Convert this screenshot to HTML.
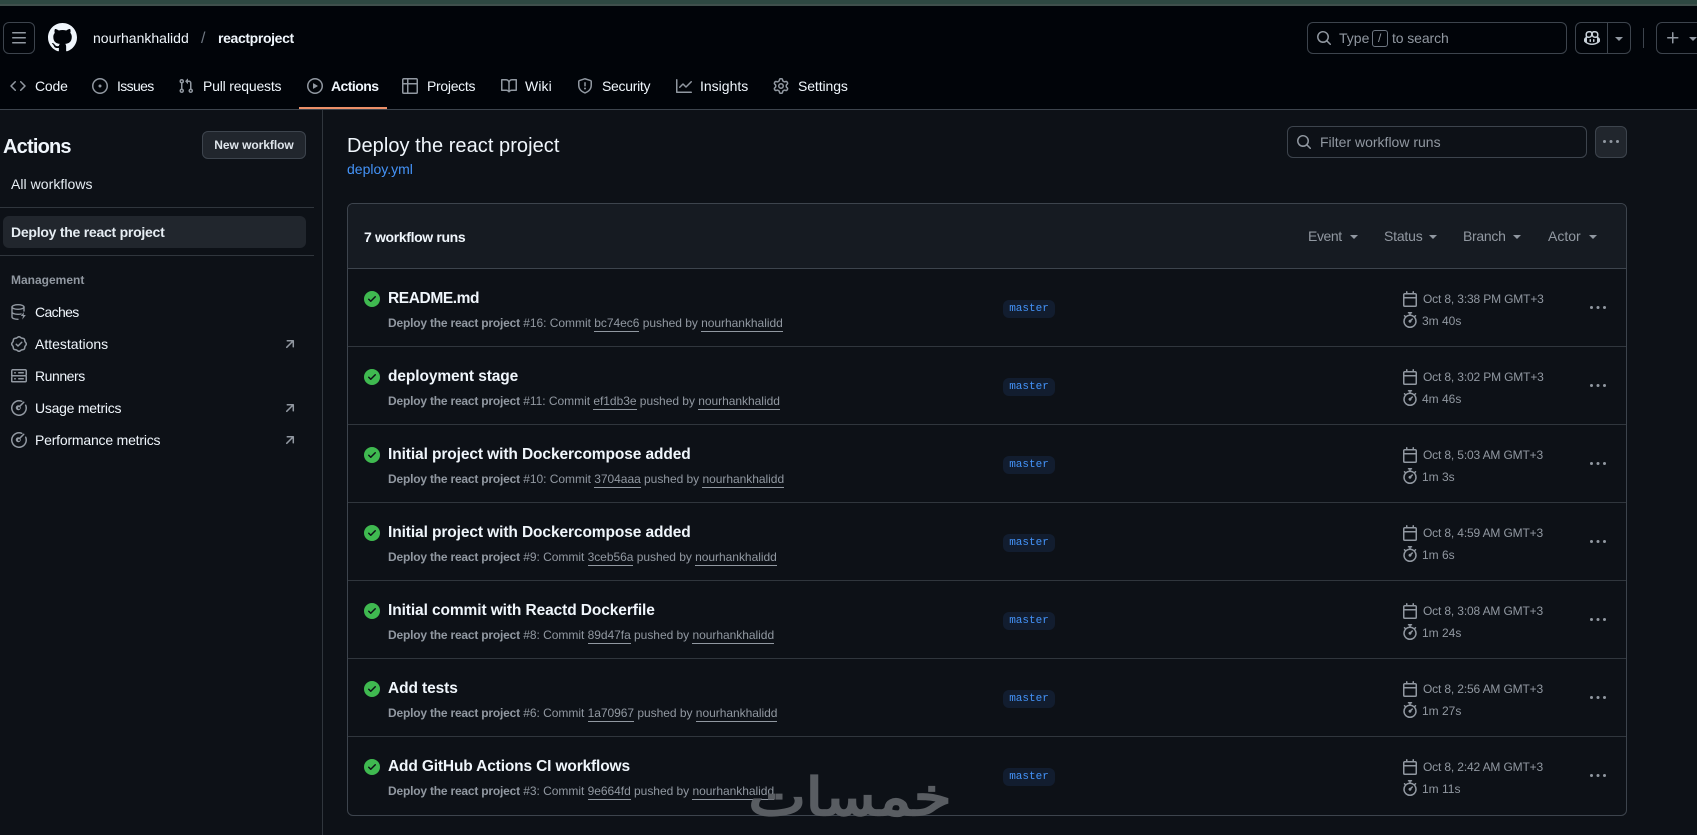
<!DOCTYPE html>
<html lang="en"><head><meta charset="utf-8"><title>Deploy the react project</title>
<style>
*{box-sizing:border-box}
html,body{margin:0;padding:0;width:1697px;height:835px;overflow:hidden;background:#0d1117}
body{position:relative;font-family:"Liberation Sans",sans-serif;font-size:14px;color:#f0f6fc}
.a,.t,svg.i{position:absolute}
.t{white-space:nowrap;line-height:20px}
svg.i{fill:#9198a1;display:block}
.b{font-weight:700}
.m{color:#9198a1}
.box{position:absolute;border:1px solid #3d444d;border-radius:6px}
.caret{position:absolute;width:0;height:0;border:4px solid transparent;border-top-color:#9198a1;border-bottom:0}
.ln{position:absolute;background:#30363d}
u{text-decoration:none;border-bottom:1px solid #9198a1;padding-bottom:1px}
.badge{position:absolute;left:1003px;width:52px;height:18px;border-radius:6px;background:#121d2f;color:#4493f8;font:11px/18px "Liberation Mono",monospace;text-align:center}
.rt{left:388px;font-size:15.5px;font-weight:700;letter-spacing:-.1px}
.rs{left:388px;font-size:12px;color:#9198a1;letter-spacing:-.03px}
.rs b{letter-spacing:-.2px}
.rd{left:1423px;font-size:12px;color:#9198a1;letter-spacing:-.15px}
.rr{left:1422px;font-size:12px;color:#9198a1}
.ok{left:364px;fill:#3fb950 !important}
.ic{left:1402px}
.kb{left:1590px}
</style></head><body>
<svg width="0" height="0" style="position:absolute"><defs>
<symbol id="gh" viewBox="0 0 16 16"><path d="M8 0c4.42 0 8 3.58 8 8a8.013 8.013 0 0 1-5.45 7.59c-.4.08-.55-.17-.55-.38 0-.27.01-1.13.01-2.2 0-.75-.25-1.23-.54-1.48 1.78-.2 3.65-.88 3.65-3.95 0-.88-.31-1.59-.82-2.15.08-.2.36-1.02-.08-2.12 0 0-.67-.22-2.2.82-.64-.18-1.32-.27-2-.27-.68 0-1.36.09-2 .27-1.53-1.03-2.2-.82-2.2-.82-.44 1.1-.16 1.92-.08 2.12-.51.56-.82 1.28-.82 2.15 0 3.06 1.86 3.75 3.64 3.95-.23.2-.44.55-.51 1.07-.46.21-1.61.55-2.33-.66-.15-.24-.6-.83-1.23-.82-.67.01-.27.38.01.53.34.19.73.9.82 1.13.16.45.68 1.31 2.69.94 0 .67.01 1.3.01 1.49 0 .21-.15.45-.55.38A7.995 7.995 0 0 1 0 8c0-4.42 3.58-8 8-8Z"/></symbol>
<symbol id="bars" viewBox="0 0 16 16"><path d="M1 2.75A.75.75 0 0 1 1.75 2h12.5a.75.75 0 0 1 0 1.5H1.75A.75.75 0 0 1 1 2.75Zm0 5A.75.75 0 0 1 1.75 7h12.5a.75.75 0 0 1 0 1.5H1.75A.75.75 0 0 1 1 7.75ZM1.75 12h12.5a.75.75 0 0 1 0 1.5H1.75a.75.75 0 0 1 0-1.5Z"/></symbol>
<symbol id="code" viewBox="0 0 16 16"><path d="m11.28 3.22 4.25 4.25a.75.75 0 0 1 0 1.06l-4.25 4.25a.749.749 0 0 1-1.275-.326.749.749 0 0 1 .215-.734L13.94 8l-3.72-3.72a.749.749 0 0 1 .326-1.275.749.749 0 0 1 .734.215Zm-6.56 0a.751.751 0 0 1 1.042.018.751.751 0 0 1 .018 1.042L2.06 8l3.72 3.72a.749.749 0 0 1-.326 1.275.749.749 0 0 1-.734-.215L.47 8.53a.75.75 0 0 1 0-1.06Z"/></symbol>
<symbol id="issue" viewBox="0 0 16 16"><path d="M8 9.5a1.5 1.5 0 1 0 0-3 1.5 1.5 0 0 0 0 3Z"/><path d="M8 0a8 8 0 1 1 0 16A8 8 0 0 1 8 0ZM1.5 8a6.5 6.5 0 1 0 13 0 6.5 6.5 0 0 0-13 0Z"/></symbol>
<symbol id="pr" viewBox="0 0 16 16"><path d="M1.5 3.25a2.25 2.25 0 1 1 3 2.122v5.256a2.251 2.251 0 1 1-1.5 0V5.372A2.25 2.25 0 0 1 1.5 3.25Zm5.677-.177L9.573.677A.25.25 0 0 1 10 .854V2.5h1A2.5 2.5 0 0 1 13.5 5v5.628a2.251 2.251 0 1 1-1.5 0V5a1 1 0 0 0-1-1h-1v1.646a.25.25 0 0 1-.427.177L7.177 3.427a.25.25 0 0 1 0-.354ZM3.75 2.5a.75.75 0 1 0 0 1.5.75.75 0 0 0 0-1.5Zm0 9.5a.75.75 0 1 0 0 1.5.75.75 0 0 0 0-1.5Zm8.25.75a.75.75 0 1 0 1.5 0 .75.75 0 0 0-1.5 0Z"/></symbol>
<symbol id="play" viewBox="0 0 16 16"><path d="M8 0a8 8 0 1 1 0 16A8 8 0 0 1 8 0ZM1.5 8a6.5 6.5 0 1 0 13 0 6.5 6.5 0 0 0-13 0Zm4.879-2.773 4.264 2.559a.25.25 0 0 1 0 .428l-4.264 2.559A.25.25 0 0 1 6 10.559V5.442a.25.25 0 0 1 .379-.215Z"/></symbol>
<symbol id="table" viewBox="0 0 16 16"><path d="M0 1.75C0 .784.784 0 1.75 0h12.5C15.216 0 16 .784 16 1.75v12.5A1.75 1.75 0 0 1 14.25 16H1.75A1.75 1.75 0 0 1 0 14.25ZM6.5 6.5v8h7.75a.25.25 0 0 0 .25-.25V6.5Zm8-1.5V1.75a.25.25 0 0 0-.25-.25H6.5V5Zm-13 1.5v7.75c0 .138.112.25.25.25H5v-8ZM5 5V1.5H1.75a.25.25 0 0 0-.25.25V5Z"/></symbol>
<symbol id="book" viewBox="0 0 16 16"><path d="M0 1.75A.75.75 0 0 1 .75 1h4.253c1.227 0 2.317.59 3 1.501A3.743 3.743 0 0 1 11.006 1h4.245a.75.75 0 0 1 .75.75v10.5a.75.75 0 0 1-.75.75h-4.507a2.25 2.25 0 0 0-1.591.659l-.622.621a.75.75 0 0 1-1.06 0l-.622-.621A2.25 2.25 0 0 0 5.258 13H.75a.75.75 0 0 1-.75-.75Zm7.251 10.324.004-5.073-.002-2.253A2.25 2.25 0 0 0 5.003 2.5H1.5v9h3.757a3.75 3.75 0 0 1 1.994.574ZM8.755 4.75l-.004 7.322a3.752 3.752 0 0 1 1.992-.572H14.5v-9h-3.495a2.25 2.25 0 0 0-2.25 2.25Z"/></symbol>
<symbol id="shield" viewBox="0 0 16 16"><path d="M7.467.133a1.748 1.748 0 0 1 1.066 0l5.25 1.68A1.75 1.75 0 0 1 15 3.48V7c0 1.566-.32 3.182-1.303 4.682-.983 1.498-2.585 2.813-5.032 3.855a1.697 1.697 0 0 1-1.33 0c-2.447-1.042-4.049-2.357-5.032-3.855C1.32 10.182 1 8.566 1 7V3.48a1.75 1.75 0 0 1 1.217-1.667Zm.61 1.429a.25.25 0 0 0-.153 0l-5.25 1.68a.25.25 0 0 0-.174.238V7c0 1.358.275 2.666 1.057 3.86.784 1.194 2.121 2.34 4.366 3.297a.196.196 0 0 0 .154 0c2.245-.956 3.582-2.104 4.366-3.298C13.225 9.666 13.5 8.36 13.5 7V3.48a.251.251 0 0 0-.174-.237l-5.25-1.68ZM8.75 4.75v3a.75.75 0 0 1-1.5 0v-3a.75.75 0 0 1 1.5 0ZM9 10.5a1 1 0 1 1-2 0 1 1 0 0 1 2 0Z"/></symbol>
<symbol id="graph" viewBox="0 0 16 16"><path d="M1.5 1.75V13.5h13.75a.75.75 0 0 1 0 1.5H.75a.75.75 0 0 1-.75-.75V1.75a.75.75 0 0 1 1.5 0Zm14.28 2.53-5.25 5.25a.75.75 0 0 1-1.06 0L7 7.06 4.28 9.78a.751.751 0 0 1-1.042-.018.751.751 0 0 1-.018-1.042l3.25-3.25a.75.75 0 0 1 1.06 0L10 7.94l4.72-4.72a.751.751 0 0 1 1.042.018.751.751 0 0 1 .018 1.042Z"/></symbol>
<symbol id="gear" viewBox="0 0 16 16"><path d="M8 0a8.2 8.2 0 0 1 .701.031C9.444.095 9.99.645 10.16 1.29l.288 1.107c.018.066.079.158.212.224.231.114.454.243.668.386.123.082.233.09.299.071l1.103-.303c.644-.176 1.392.021 1.82.63.27.385.506.792.704 1.218.315.675.111 1.422-.364 1.891l-.814.806c-.049.048-.098.147-.088.294.016.257.016.515 0 .772-.01.147.038.246.088.294l.814.806c.475.469.679 1.216.364 1.891a7.977 7.977 0 0 1-.704 1.217c-.428.61-1.176.807-1.82.63l-1.102-.302c-.067-.019-.177-.011-.3.071a5.909 5.909 0 0 1-.668.386c-.133.066-.194.158-.211.224l-.29 1.106c-.168.646-.715 1.196-1.458 1.26a8.006 8.006 0 0 1-1.402 0c-.743-.064-1.289-.614-1.458-1.26l-.289-1.106c-.018-.066-.079-.158-.212-.224a5.738 5.738 0 0 1-.668-.386c-.123-.082-.233-.09-.299-.071l-1.103.303c-.644.176-1.392-.021-1.82-.63a8.12 8.12 0 0 1-.704-1.218c-.315-.675-.111-1.422.363-1.891l.815-.806c.05-.048.098-.147.088-.294a6.214 6.214 0 0 1 0-.772c.01-.147-.038-.246-.088-.294l-.815-.806C.635 6.045.431 5.298.746 4.623a7.92 7.92 0 0 1 .704-1.217c.428-.61 1.176-.807 1.82-.63l1.102.302c.067.019.177.011.3-.071.214-.143.437-.272.668-.386.133-.066.194-.158.211-.224l.29-1.106C6.009.645 6.556.095 7.299.03 7.53.01 7.764 0 8 0Zm-.571 1.525c-.036.003-.108.036-.137.146l-.289 1.105c-.147.561-.549.967-.998 1.189-.173.086-.34.183-.5.29-.417.278-.97.423-1.529.27l-1.103-.303c-.109-.03-.175.016-.195.045-.22.312-.412.644-.573.99-.014.031-.021.11.059.19l.815.806c.411.406.562.957.53 1.456a4.709 4.709 0 0 0 0 .582c.032.499-.119 1.05-.53 1.456l-.815.806c-.081.08-.073.159-.059.19.162.346.353.677.573.989.02.03.085.076.195.046l1.102-.303c.56-.153 1.113-.008 1.53.27.161.107.328.204.501.29.447.222.85.629.997 1.189l.289 1.105c.029.109.101.143.137.146a6.6 6.6 0 0 0 1.142 0c.036-.003.108-.036.137-.146l.289-1.105c.147-.561.549-.967.998-1.189.173-.086.34-.183.5-.29.417-.278.97-.423 1.529-.27l1.103.303c.109.029.175-.016.195-.045.22-.313.411-.644.573-.99.014-.031.021-.11-.059-.19l-.815-.806c-.411-.406-.562-.957-.53-1.456a4.709 4.709 0 0 0 0-.582c-.032-.499.119-1.05.53-1.456l.815-.806c.081-.08.073-.159.059-.19a6.464 6.464 0 0 0-.573-.989c-.02-.03-.085-.076-.195-.046l-1.102.303c-.56.153-1.113.008-1.53-.27a4.44 4.44 0 0 0-.501-.29c-.447-.222-.85-.629-.997-1.189l-.289-1.105c-.029-.11-.101-.143-.137-.146a6.6 6.6 0 0 0-1.142 0ZM11 8a3 3 0 1 1-6 0 3 3 0 0 1 6 0ZM9.5 8a1.5 1.5 0 1 0-3.001.001A1.5 1.5 0 0 0 9.5 8Z"/></symbol>
<symbol id="search" viewBox="0 0 16 16"><path d="M10.68 11.74a6 6 0 0 1-7.922-8.982 6 6 0 0 1 8.982 7.922l3.04 3.04a.749.749 0 0 1-.326 1.275.749.749 0 0 1-.734-.215ZM11.5 7a4.499 4.499 0 1 0-8.997 0A4.499 4.499 0 0 0 11.5 7Z"/></symbol>
<symbol id="kebab" viewBox="0 0 16 16"><path d="M8 9a1.5 1.5 0 1 0 0-3 1.5 1.5 0 0 0 0 3ZM1.5 9a1.5 1.5 0 1 0 0-3 1.5 1.5 0 0 0 0 3Zm13 0a1.5 1.5 0 1 0 0-3 1.5 1.5 0 0 0 0 3Z"/></symbol>
<symbol id="check" viewBox="0 0 16 16"><path d="M8 16A8 8 0 1 1 8 0a8 8 0 0 1 0 16Zm3.78-9.72a.751.751 0 0 0-.018-1.042.751.751 0 0 0-1.042-.018L6.75 9.19 5.28 7.72a.751.751 0 0 0-1.042.018.751.751 0 0 0-.018 1.042l2 2a.75.75 0 0 0 1.06 0Z"/></symbol>
<symbol id="cal" viewBox="0 0 16 16"><path d="M4.75 0a.75.75 0 0 1 .75.75V2h5V.75a.75.75 0 0 1 1.5 0V2h1.25c.966 0 1.75.784 1.75 1.75v10.5A1.75 1.75 0 0 1 13.25 16H2.75A1.75 1.75 0 0 1 1 14.25V3.75C1 2.784 1.784 2 2.75 2H4V.75A.75.75 0 0 1 4.75 0ZM2.5 7.5v6.75c0 .138.112.25.25.25h10.5a.25.25 0 0 0 .25-.25V7.5Zm10.75-4H2.75a.25.25 0 0 0-.25.25V6h11V3.75a.25.25 0 0 0-.25-.25Z"/></symbol>
<symbol id="watch" viewBox="0 0 16 16"><path d="M5.75.75A.75.75 0 0 1 6.5 0h3a.75.75 0 0 1 0 1.5h-.75v1l-.001.041a6.724 6.724 0 0 1 3.464 1.435l.007-.006.75-.75a.749.749 0 0 1 1.275.326.749.749 0 0 1-.215.734l-.75.75-.006.007a6.75 6.75 0 1 1-10.548 0L2.72 5.03l-.75-.75a.751.751 0 0 1 .018-1.042.751.751 0 0 1 1.042-.018l.75.75.007.006A6.72 6.72 0 0 1 7.25 2.541V1.5H6.5a.75.75 0 0 1-.75-.75ZM8 14.5a5.25 5.25 0 1 0-.001-10.501A5.25 5.25 0 0 0 8 14.5Zm.389-6.7 1.33-1.33a.75.75 0 1 1 1.061 1.06L9.45 8.861A1.503 1.503 0 0 1 8 10.75a1.499 1.499 0 1 1 .389-2.95Z"/></symbol>
<symbol id="arrow" viewBox="0 0 16 16"><path d="M4.53 4.75A.75.75 0 0 1 5.28 4h6.01a.75.75 0 0 1 .75.75v6.01a.75.75 0 0 1-1.5 0v-4.2l-5.26 5.261a.749.749 0 0 1-1.275-.326.749.749 0 0 1 .215-.734L9.48 5.5h-4.2a.75.75 0 0 1-.75-.75Z"/></symbol>
<symbol id="plus" viewBox="0 0 16 16"><path d="M7.75 2a.75.75 0 0 1 .75.75V7h4.25a.75.75 0 0 1 0 1.5H8.5v4.25a.75.75 0 0 1-1.5 0V8.5H2.75a.75.75 0 0 1 0-1.5H7V2.75A.75.75 0 0 1 7.75 2Z"/></symbol>
<symbol id="copilot" viewBox="0 0 16 16"><path d="M7.998 15.035c-4.562 0-7.873-2.914-7.998-3.749V9.338c.085-.628.677-1.686 1.588-2.065.013-.07.024-.143.036-.218.029-.183.06-.384.126-.612-.201-.508-.254-1.084-.254-1.656 0-.87.128-1.769.693-2.484.579-.733 1.494-1.124 2.724-1.261 1.206-.134 2.262.034 2.944.765.05.053.096.108.139.165.044-.057.094-.112.143-.165.682-.731 1.738-.899 2.944-.765 1.23.137 2.145.528 2.724 1.261.566.715.693 1.614.693 2.484 0 .572-.053 1.148-.254 1.656.066.228.098.429.126.612.012.076.024.148.037.218.924.385 1.522 1.471 1.591 2.095v1.872c0 .766-3.351 3.795-8.002 3.795Zm0-1.485c2.28 0 4.584-1.11 5.002-1.433V7.862l-.023-.116c-.49.21-1.075.291-1.727.291-1.146 0-2.059-.327-2.71-.991A3.222 3.222 0 0 1 8 6.303a3.24 3.24 0 0 1-.544.743c-.65.664-1.563.991-2.71.991-.652 0-1.236-.081-1.727-.291l-.023.116v4.255c.419.323 2.722 1.433 5.002 1.433ZM6.762 2.83c-.193-.206-.637-.413-1.682-.297-1.019.113-1.479.404-1.713.7-.247.312-.369.789-.369 1.554 0 .793.129 1.171.308 1.371.162.181.519.379 1.442.379.853 0 1.339-.235 1.638-.54.315-.322.527-.827.617-1.553.117-.935-.037-1.395-.241-1.614Zm4.155-.297c-1.044-.116-1.488.091-1.681.297-.204.219-.359.679-.242 1.614.091.726.303 1.231.618 1.553.299.305.784.54 1.638.54.922 0 1.28-.198 1.442-.379.179-.2.308-.578.308-1.371 0-.765-.123-1.242-.37-1.554-.233-.296-.693-.587-1.713-.7Z"/><path d="M6.25 9.037a.75.75 0 0 1 .75.75v1.501a.75.75 0 0 1-1.5 0V9.787a.75.75 0 0 1 .75-.75Zm4.25.75v1.501a.75.75 0 0 1-1.5 0V9.787a.75.75 0 0 1 1.5 0Z"/></symbol>
<symbol id="cache" viewBox="0 0 16 16"><g fill="none" stroke="#9198a1" stroke-width="1.4" stroke-linecap="round"><ellipse cx="7" cy="3" rx="6" ry="2.3"/><path d="M1 3v10c0 1.3 2.6 2.3 6 2.3M1 8c0 1.3 2.6 2.3 6 2.3 1 0 2-.1 3-.3M13 3v4"/></g><path d="M13 8l-3.2 4h2.2l-.8 3.6 3.6-4.6h-2.2z" fill="#9198a1"/></symbol>
<symbol id="verified" viewBox="0 0 16 16"><path d="m9.585.52.929.68c.153.112.331.186.518.215l1.138.175a2.678 2.678 0 0 1 2.24 2.24l.174 1.139c.029.187.103.365.215.518l.68.928a2.677 2.677 0 0 1 0 3.17l-.68.928a1.174 1.174 0 0 0-.215.518l-.175 1.138a2.678 2.678 0 0 1-2.241 2.241l-1.138.175a1.17 1.17 0 0 0-.518.215l-.928.68a2.677 2.677 0 0 1-3.17 0l-.928-.68a1.174 1.174 0 0 0-.518-.215L3.83 14.41a2.678 2.678 0 0 1-2.24-2.24l-.175-1.138a1.17 1.17 0 0 0-.215-.518l-.68-.928a2.677 2.677 0 0 1 0-3.17l.68-.928c.112-.153.186-.331.215-.518l.175-1.14a2.678 2.678 0 0 1 2.24-2.24l1.139-.175c.187-.029.365-.103.518-.215l.928-.68a2.677 2.677 0 0 1 3.17 0ZM7.303 1.728l-.927.68a2.67 2.67 0 0 1-1.18.489l-1.137.174a1.179 1.179 0 0 0-.987.987l-.174 1.136a2.677 2.677 0 0 1-.489 1.18l-.68.928a1.18 1.18 0 0 0 0 1.394l.68.927c.256.348.424.753.489 1.18l.174 1.137c.078.509.478.909.987.987l1.136.174a2.67 2.67 0 0 1 1.18.489l.928.68c.414.305.979.305 1.394 0l.927-.68a2.67 2.67 0 0 1 1.18-.489l1.137-.174a1.18 1.18 0 0 0 .987-.987l.174-1.136a2.67 2.67 0 0 1 .489-1.18l.68-.928a1.176 1.176 0 0 0 0-1.394l-.68-.927a2.686 2.686 0 0 1-.489-1.18l-.174-1.137a1.179 1.179 0 0 0-.987-.987l-1.136-.174a2.677 2.677 0 0 1-1.18-.489l-.928-.68a1.176 1.176 0 0 0-1.394 0ZM11.28 6.78l-3.75 3.75a.75.75 0 0 1-1.06 0L4.72 8.78a.751.751 0 0 1 .018-1.042.751.751 0 0 1 1.042-.018l1.22 1.22 3.22-3.22a.751.751 0 0 1 1.042.018.751.751 0 0 1 .018 1.042Z"/></symbol>
<symbol id="server" viewBox="0 0 16 16"><path d="M1.75 1h12.5c.966 0 1.75.784 1.75 1.75v4c0 .372-.116.717-.314 1 .198.283.314.628.314 1v4a1.75 1.75 0 0 1-1.75 1.75H1.75A1.75 1.75 0 0 1 0 13.75v-4c0-.372.116-.717.314-1a1.739 1.739 0 0 1-.314-1v-4C0 1.784.784 1 1.75 1ZM1.5 2.75v4c0 .138.112.25.25.25h12.5a.25.25 0 0 0 .25-.25v-4a.25.25 0 0 0-.25-.25H1.75a.25.25 0 0 0-.25.25Zm.25 5.75a.25.25 0 0 0-.25.25v4c0 .138.112.25.25.25h12.5a.25.25 0 0 0 .25-.25v-4a.25.25 0 0 0-.25-.25ZM7 4.75A.75.75 0 0 1 7.75 4h4.5a.75.75 0 0 1 0 1.5h-4.5A.75.75 0 0 1 7 4.75ZM7.75 10h4.5a.75.75 0 0 1 0 1.5h-4.5a.75.75 0 0 1 0-1.5ZM3 4.75A.75.75 0 0 1 3.75 4h.5a.75.75 0 0 1 0 1.5h-.5A.75.75 0 0 1 3 4.75ZM3.75 10h.5a.75.75 0 0 1 0 1.5h-.5a.75.75 0 0 1 0-1.5Z"/></symbol>
<symbol id="meter" viewBox="0 0 16 16"><path d="M8 1.5a6.5 6.5 0 1 0 6.016 4.035.75.75 0 0 1 1.388-.57A8 8 0 1 1 8 0a8 8 0 0 1 3.034.595.75.75 0 0 1-.568 1.388A6.517 6.517 0 0 0 8 1.5Zm5.28.22a.75.75 0 0 1 0 1.06L9.48 6.58a2.5 2.5 0 1 1-1.06-1.06l3.8-3.8a.75.75 0 0 1 1.06 0ZM8 7a1 1 0 1 0 0 2 1 1 0 0 0 0-2Z"/></symbol>
</defs></svg>

<!-- top strip + header -->
<div class="a" style="left:0;top:0;width:1697px;height:5px;background:#2e4842"></div>
<div class="a" style="left:0;top:4px;width:1697px;height:2px;background:#3f4f4c"></div>
<div class="a" style="left:0;top:6px;width:1697px;height:103px;background:#010409"></div>
<div class="ln" style="left:0;top:109px;width:1697px;height:1px;background:#3d444d"></div>

<div class="box" style="left:3px;top:22px;width:32px;height:32px"></div>
<svg class="i" style="left:11px;top:30px" width="16" height="16"><use href="#bars"/></svg>
<svg class="i" style="left:48px;top:23px;fill:#f0f6fc" width="29" height="29"><use href="#gh"/></svg>
<div class="t" style="left:93px;top:28px">nourhankhalidd</div>
<div class="t" style="left:201px;top:29px;font-size:16px;color:#6e7681">/</div>
<div class="t b" style="left:218px;top:28px;letter-spacing:-.36px">reactproject</div>

<div class="box" style="left:1307px;top:22px;width:260px;height:32px"></div>
<svg class="i" style="left:1316px;top:30px" width="16" height="16"><use href="#search"/></svg>
<div class="t m" style="left:1339px;top:28px">Type</div>
<div class="box" style="left:1372px;top:30px;width:16px;height:17px;border-radius:3px;border-color:#6e7681"></div>
<div class="t m" style="left:1378px;top:28px;font-size:12px">/</div>
<div class="t m" style="left:1392px;top:28px;letter-spacing:-.1px">to search</div>

<div class="box" style="left:1575px;top:22px;width:56px;height:32px"></div>
<div class="ln" style="left:1607px;top:22px;width:1px;height:32px;background:#3d444d"></div>
<svg class="i" style="left:1584px;top:30px;fill:#c9d1d9" width="16" height="16"><use href="#copilot"/></svg>
<div class="caret" style="left:1615px;top:37px"></div>
<div class="ln" style="left:1643px;top:28px;width:1px;height:20px;background:#3d444d"></div>
<div class="box" style="left:1656px;top:22px;width:60px;height:32px"></div>
<svg class="i" style="left:1665px;top:30px" width="16" height="16"><use href="#plus"/></svg>
<div class="caret" style="left:1689px;top:37px"></div>

<!-- repo nav -->
<svg class="i" style="left:10px;top:78px" width="16" height="16"><use href="#code"/></svg>
<div class="t" style="left:35px;top:76px;letter-spacing:-.2px">Code</div>
<svg class="i" style="left:92px;top:78px" width="16" height="16"><use href="#issue"/></svg>
<div class="t" style="left:117px;top:76px;letter-spacing:-.65px">Issues</div>
<svg class="i" style="left:178px;top:78px" width="16" height="16"><use href="#pr"/></svg>
<div class="t" style="left:203px;top:76px;letter-spacing:-.2px">Pull requests</div>
<svg class="i" style="left:307px;top:78px" width="16" height="16"><use href="#play"/></svg>
<div class="t b" style="left:331px;top:76px;letter-spacing:-.55px">Actions</div>
<div class="a" style="left:299px;top:107px;width:88px;height:2px;background:#ec8f68"></div>
<svg class="i" style="left:402px;top:78px" width="16" height="16"><use href="#table"/></svg>
<div class="t" style="left:427px;top:76px;letter-spacing:-.3px">Projects</div>
<svg class="i" style="left:501px;top:78px" width="16" height="16"><use href="#book"/></svg>
<div class="t" style="left:525px;top:76px;letter-spacing:.1px">Wiki</div>
<svg class="i" style="left:577px;top:78px" width="16" height="16"><use href="#shield"/></svg>
<div class="t" style="left:602px;top:76px;letter-spacing:-.3px">Security</div>
<svg class="i" style="left:676px;top:78px" width="16" height="16"><use href="#graph"/></svg>
<div class="t" style="left:700px;top:76px">Insights</div>
<svg class="i" style="left:773px;top:78px" width="16" height="16"><use href="#gear"/></svg>
<div class="t" style="left:798px;top:76px;letter-spacing:-.1px">Settings</div>

<!-- sidebar -->
<div class="ln" style="left:322px;top:110px;width:1px;height:725px"></div>
<div class="t b" style="left:3px;top:137px;font-size:20px;line-height:20px;letter-spacing:-.8px">Actions</div>
<div class="box" style="left:202px;top:131px;width:104px;height:28px;background:#21262d"></div>
<div class="t b" style="left:202px;top:135px;width:104px;font-size:12px;text-align:center;color:#dfe5eb;letter-spacing:-.05px">New workflow</div>
<div class="t" style="left:11px;top:174px;color:#e6edf3;letter-spacing:.05px">All workflows</div>
<div class="ln" style="left:0;top:207px;width:314px;height:1px"></div>
<div class="a" style="left:3px;top:216px;width:303px;height:32px;border-radius:6px;background:#21262d"></div>
<div class="t b" style="left:11px;top:222px;color:#e6edf3;letter-spacing:-.25px">Deploy the react project</div>
<div class="ln" style="left:0;top:255px;width:314px;height:1px"></div>
<div class="t b m" style="left:11px;top:270px;font-size:12px">Management</div>

<svg class="i" style="left:11px;top:304px" width="16" height="16"><use href="#cache"/></svg>
<div class="t" style="left:35px;top:302px;letter-spacing:-.65px">Caches</div>
<svg class="i" style="left:11px;top:336px" width="16" height="16"><use href="#verified"/></svg>
<div class="t" style="left:35px;top:334px">Attestations</div>
<svg class="i" style="left:282px;top:336px" width="16" height="16"><use href="#arrow"/></svg>
<svg class="i" style="left:11px;top:368px" width="16" height="16"><use href="#server"/></svg>
<div class="t" style="left:35px;top:366px;letter-spacing:-.45px">Runners</div>
<svg class="i" style="left:11px;top:400px" width="16" height="16"><use href="#meter"/></svg>
<div class="t" style="left:35px;top:398px;letter-spacing:-.25px">Usage metrics</div>
<svg class="i" style="left:282px;top:400px" width="16" height="16"><use href="#arrow"/></svg>
<svg class="i" style="left:11px;top:432px" width="16" height="16"><use href="#meter"/></svg>
<div class="t" style="left:35px;top:430px;letter-spacing:-.2px">Performance metrics</div>
<svg class="i" style="left:282px;top:432px" width="16" height="16"><use href="#arrow"/></svg>

<!-- main header -->
<div class="t" style="left:347px;top:136px;font-size:20px;letter-spacing:.05px">Deploy the react project</div>
<div class="t" style="left:347px;top:159px;color:#4493f8">deploy.yml</div>
<div class="box" style="left:1287px;top:126px;width:300px;height:32px"></div>
<svg class="i" style="left:1296px;top:134px" width="16" height="16"><use href="#search"/></svg>
<div class="t m" style="left:1320px;top:132px">Filter workflow runs</div>
<div class="box" style="left:1595px;top:126px;width:32px;height:32px;background:#21262d"></div>
<svg class="i" style="left:1603px;top:134px" width="16" height="16"><use href="#kebab"/></svg>

<!-- table -->
<div class="box" style="left:347px;top:203px;width:1280px;height:613px;overflow:hidden">
  <div class="a" style="left:0;top:0;width:1278px;height:65px;background:#161b22;border-bottom:1px solid #3d444d"></div>
</div>
<div class="t b" style="left:364px;top:227px;letter-spacing:-.35px">7 workflow runs</div>
<div class="t m" style="left:1308px;top:226px;letter-spacing:-.4px">Event</div><div class="caret" style="left:1350px;top:235px"></div>
<div class="t m" style="left:1384px;top:226px;letter-spacing:-.2px">Status</div><div class="caret" style="left:1429px;top:235px"></div>
<div class="t m" style="left:1463px;top:226px;letter-spacing:-.3px">Branch</div><div class="caret" style="left:1513px;top:235px"></div>
<div class="t m" style="left:1548px;top:226px">Actor</div><div class="caret" style="left:1589px;top:235px"></div>

<div class="ln" style="left:348px;top:346px;width:1278px;height:1px"></div>
<div class="ln" style="left:348px;top:424px;width:1278px;height:1px"></div>
<div class="ln" style="left:348px;top:502px;width:1278px;height:1px"></div>
<div class="ln" style="left:348px;top:580px;width:1278px;height:1px"></div>
<div class="ln" style="left:348px;top:658px;width:1278px;height:1px"></div>
<div class="ln" style="left:348px;top:736px;width:1278px;height:1px"></div>

<!-- row 1 -->
<svg class="i ok" style="top:291px" width="16" height="16"><use href="#check"/></svg>
<div class="t rt" style="top:289px;letter-spacing:-.4px">README.md</div>
<div class="t rs" style="top:313px"><b>Deploy the react project</b> #16: Commit <u>bc74ec6</u> pushed by <u>nourhankhalidd</u></div>
<div class="badge" style="top:300px">master</div>
<svg class="i ic" style="top:291px" width="16" height="16"><use href="#cal"/></svg>
<div class="t rd" style="top:289px">Oct 8, 3:38 PM GMT+3</div>
<svg class="i ic" style="top:312px" width="16" height="16"><use href="#watch"/></svg>
<div class="t rr" style="top:311px">3m 40s</div>
<svg class="i kb" style="top:300px" width="16" height="16"><use href="#kebab"/></svg>
<!-- row 2 -->
<svg class="i ok" style="top:369px" width="16" height="16"><use href="#check"/></svg>
<div class="t rt" style="top:367px">deployment stage</div>
<div class="t rs" style="top:391px"><b>Deploy the react project</b> #11: Commit <u>ef1db3e</u> pushed by <u>nourhankhalidd</u></div>
<div class="badge" style="top:378px">master</div>
<svg class="i ic" style="top:369px" width="16" height="16"><use href="#cal"/></svg>
<div class="t rd" style="top:367px">Oct 8, 3:02 PM GMT+3</div>
<svg class="i ic" style="top:390px" width="16" height="16"><use href="#watch"/></svg>
<div class="t rr" style="top:389px">4m 46s</div>
<svg class="i kb" style="top:378px" width="16" height="16"><use href="#kebab"/></svg>
<!-- row 3 -->
<svg class="i ok" style="top:447px" width="16" height="16"><use href="#check"/></svg>
<div class="t rt" style="top:445px">Initial project with Dockercompose added</div>
<div class="t rs" style="top:469px"><b>Deploy the react project</b> #10: Commit <u>3704aaa</u> pushed by <u>nourhankhalidd</u></div>
<div class="badge" style="top:456px">master</div>
<svg class="i ic" style="top:447px" width="16" height="16"><use href="#cal"/></svg>
<div class="t rd" style="top:445px">Oct 8, 5:03 AM GMT+3</div>
<svg class="i ic" style="top:468px" width="16" height="16"><use href="#watch"/></svg>
<div class="t rr" style="top:467px">1m 3s</div>
<svg class="i kb" style="top:456px" width="16" height="16"><use href="#kebab"/></svg>
<!-- row 4 -->
<svg class="i ok" style="top:525px" width="16" height="16"><use href="#check"/></svg>
<div class="t rt" style="top:523px">Initial project with Dockercompose added</div>
<div class="t rs" style="top:547px"><b>Deploy the react project</b> #9: Commit <u>3ceb56a</u> pushed by <u>nourhankhalidd</u></div>
<div class="badge" style="top:534px">master</div>
<svg class="i ic" style="top:525px" width="16" height="16"><use href="#cal"/></svg>
<div class="t rd" style="top:523px">Oct 8, 4:59 AM GMT+3</div>
<svg class="i ic" style="top:546px" width="16" height="16"><use href="#watch"/></svg>
<div class="t rr" style="top:545px">1m 6s</div>
<svg class="i kb" style="top:534px" width="16" height="16"><use href="#kebab"/></svg>
<!-- row 5 -->
<svg class="i ok" style="top:603px" width="16" height="16"><use href="#check"/></svg>
<div class="t rt" style="top:601px">Initial commit with Reactd Dockerfile</div>
<div class="t rs" style="top:625px"><b>Deploy the react project</b> #8: Commit <u>89d47fa</u> pushed by <u>nourhankhalidd</u></div>
<div class="badge" style="top:612px">master</div>
<svg class="i ic" style="top:603px" width="16" height="16"><use href="#cal"/></svg>
<div class="t rd" style="top:601px">Oct 8, 3:08 AM GMT+3</div>
<svg class="i ic" style="top:624px" width="16" height="16"><use href="#watch"/></svg>
<div class="t rr" style="top:623px">1m 24s</div>
<svg class="i kb" style="top:612px" width="16" height="16"><use href="#kebab"/></svg>
<!-- row 6 -->
<svg class="i ok" style="top:681px" width="16" height="16"><use href="#check"/></svg>
<div class="t rt" style="top:679px">Add tests</div>
<div class="t rs" style="top:703px"><b>Deploy the react project</b> #6: Commit <u>1a70967</u> pushed by <u>nourhankhalidd</u></div>
<div class="badge" style="top:690px">master</div>
<svg class="i ic" style="top:681px" width="16" height="16"><use href="#cal"/></svg>
<div class="t rd" style="top:679px">Oct 8, 2:56 AM GMT+3</div>
<svg class="i ic" style="top:702px" width="16" height="16"><use href="#watch"/></svg>
<div class="t rr" style="top:701px">1m 27s</div>
<svg class="i kb" style="top:690px" width="16" height="16"><use href="#kebab"/></svg>
<!-- row 7 -->
<svg class="i ok" style="top:759px" width="16" height="16"><use href="#check"/></svg>
<div class="t rt" style="top:757px;letter-spacing:-.15px">Add GitHub Actions CI workflows</div>
<div class="t rs" style="top:781px"><b>Deploy the react project</b> #3: Commit <u>9e664fd</u> pushed by <u>nourhankhalidd</u></div>
<div class="badge" style="top:768px">master</div>
<svg class="i ic" style="top:759px" width="16" height="16"><use href="#cal"/></svg>
<div class="t rd" style="top:757px">Oct 8, 2:42 AM GMT+3</div>
<svg class="i ic" style="top:780px" width="16" height="16"><use href="#watch"/></svg>
<div class="t rr" style="top:779px">1m 11s</div>
<svg class="i kb" style="top:768px" width="16" height="16"><use href="#kebab"/></svg>

<!-- watermark -->
<svg class="a" style="left:740px;top:765px" width="220" height="60"><text x="110" y="50" text-anchor="middle" direction="rtl" font-family="DejaVu Sans, sans-serif" font-size="52" textLength="203" lengthAdjust="spacingAndGlyphs" fill="#595d62" stroke="#595d62" stroke-width="2.2">خمسات</text></svg>
</body></html>
